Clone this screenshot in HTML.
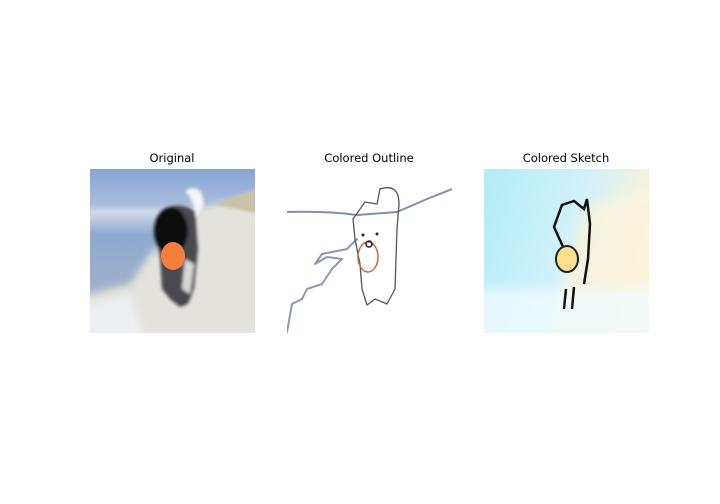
<!DOCTYPE html>
<html><head><style>
html,body{margin:0;padding:0;background:#fff;width:720px;height:504px;overflow:hidden;font-family:"DejaVu Sans","Liberation Sans",sans-serif}
.t{position:absolute;top:151px;font-size:11.5px;color:#000;width:200px;text-align:center}
svg{position:absolute;top:169px;overflow:hidden}
</style></head><body>
<div class="t" style="left:72px">Original</div>
<div class="t" style="left:269px">Colored Outline</div>
<div class="t" style="left:466px">Colored Sketch</div>

<svg style="left:90px" width="165" height="164" viewBox="0 0 165 164">
<defs>
<linearGradient id="sky" x1="0" y1="0" x2="0" y2="1"><stop offset="0" stop-color="#86a4d4"/><stop offset="0.22" stop-color="#a9bddd"/><stop offset="0.26" stop-color="#d0d9e8"/><stop offset="0.4" stop-color="#8fa9d0"/><stop offset="0.7" stop-color="#9db0cc"/><stop offset="1" stop-color="#a8b4c8"/></linearGradient>
<filter id="b" x="-20%" y="-20%" width="140%" height="140%"><feGaussianBlur stdDeviation="4"/></filter>
<filter id="b2"><feGaussianBlur stdDeviation="1.5"/></filter>
</defs>
<rect width="165" height="164" fill="url(#sky)"/>
<g filter="url(#b)">
<path d="M110 40 L190 20 L190 190 L20 190 L-20 150 L-20 130 L40 115 L60 85 L95 55Z" fill="#e4e2dc"/>
<path d="M-20 140 L40 125 L60 190 L-20 190Z" fill="#eceef2"/>
</g>
<path d="M125 35 Q150 24 170 20 L170 45 Q145 40 125 35Z" fill="#c8c2a8" filter="url(#b2)"/>
<g filter="url(#b2)">
<path d="M70 45 Q85 30 105 42 L108 80 L104 120 L98 135 L90 138 L80 130 L72 120 L70 90 L66 60Z" fill="#4a4a50"/>
<path d="M95 22 Q112 12 114 36 L106 48 Q104 32 95 22Z" fill="#f4f4f4"/>
<ellipse cx="81" cy="62" rx="17" ry="24" fill="#111"/>
<path d="M95 90 L104 95 L100 125 L92 120Z" fill="#d8d8d8"/>
</g>
<ellipse cx="83" cy="87" rx="12" ry="14" fill="#f47e3e"/>
</svg>

<svg style="left:287px" width="165" height="164" viewBox="0 0 165 164" fill="none" stroke-linecap="round" stroke-linejoin="round">
<path d="M0 43 Q40 42 70 46 L110 43 L140 30 L165 20" stroke="#7f8fac" stroke-width="2"/>
<path d="M0 163 L5 135 L15 130 L20 120 L35 115 L45 100 L55 90 L40 88 L28 95 L35 85 L60 80 L70 70" stroke="#8d99b0" stroke-width="2"/>
<path d="M93 20 Q112 14 112 35 L110 60 L108 120 L100 135 L88 130 L80 136 L75 120 L73 95 L68 70 L66 50 L78 33 L90 35 Z" stroke="#555" stroke-width="1.3"/>
<ellipse cx="81" cy="88" rx="10" ry="15" stroke="#c46a4a" stroke-width="1.5"/>
<circle cx="76" cy="66" r="1.5" fill="#222"/><circle cx="90" cy="65" r="1.5" fill="#222"/>
<circle cx="82" cy="75" r="3" stroke="#222" stroke-width="1.5"/>
</svg>

<svg style="left:484px" width="165" height="164" viewBox="0 0 165 164">
<defs>
<linearGradient id="s3" x1="0" y1="0" x2="1" y2="0.3"><stop offset="0" stop-color="#b2ebf8"/><stop offset="0.6" stop-color="#d2f2fa"/><stop offset="1" stop-color="#fbf3d6"/></linearGradient>
<filter id="b3" x="-20%" y="-20%" width="140%" height="140%"><feGaussianBlur stdDeviation="6"/></filter>
</defs>
<rect width="165" height="164" fill="url(#s3)"/>
<path d="M100 40 L190 10 L190 190 L60 190 Z" fill="#fbf4dc" opacity="0.8" filter="url(#b3)"/>
<rect x="-20" y="120" width="210" height="70" fill="#f0fbff" opacity="0.8" filter="url(#b3)"/>
<path d="M80 80 L70 58 L78 36 L90 32 L100 40 L103 30 L106 55 L104 90 L100 115 M82 120 L80 140 M90 118 L88 140" fill="none" stroke="#111" stroke-width="2.5"/>
<ellipse cx="83" cy="90" rx="11" ry="13" fill="#fbe090" stroke="#222" stroke-width="2"/>
</svg>
</body></html>
